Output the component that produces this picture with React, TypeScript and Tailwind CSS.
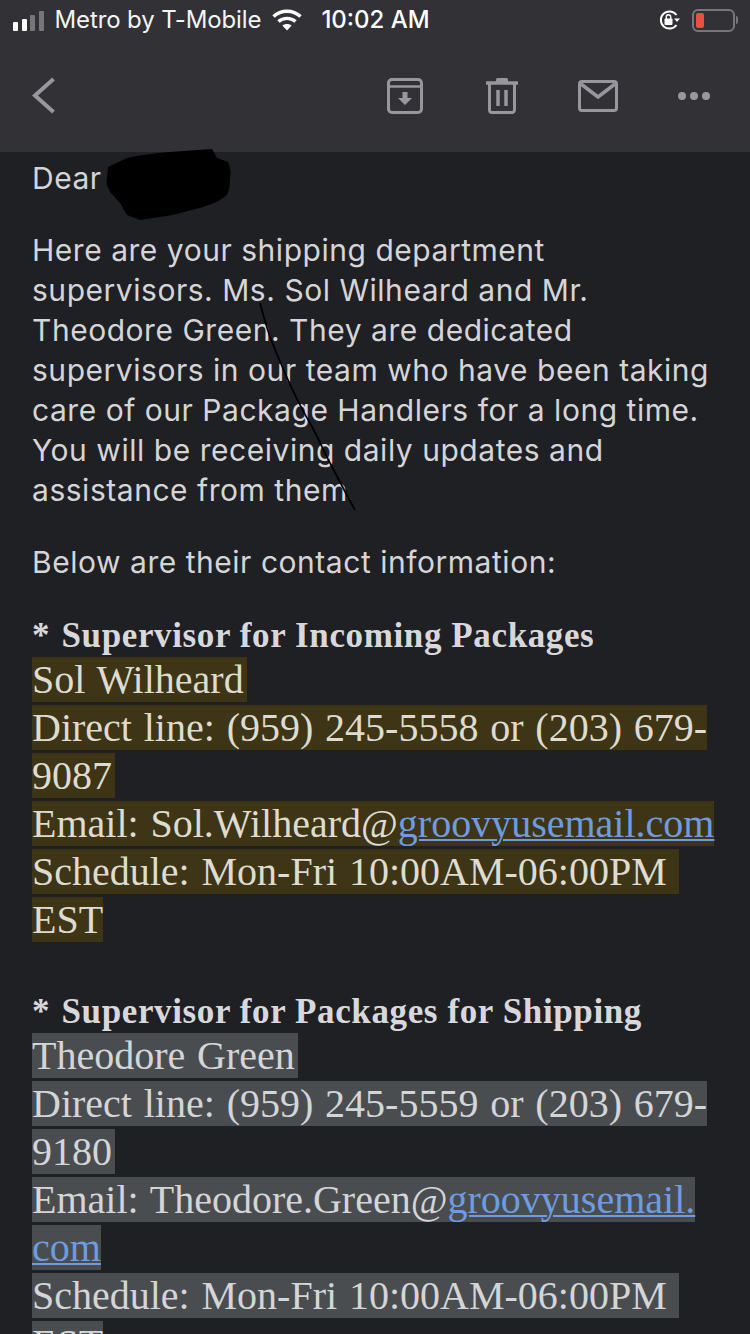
import React from "react";

const serif = "font-['Liberation_Serif',serif]";

function Signal() {
    return (
        <div className="flex items-end gap-[3.500px] h-[22px] mb-[1px]">
            <div className="w-[5px] h-[9px] rounded-[1px] bg-white"></div>
            <div className="w-[5px] h-[12px] rounded-[1px] bg-white"></div>
            <div className="w-[5px] h-[16px] rounded-[1px] bg-[#77777b]"></div>
            <div className="w-[5px] h-[20px] rounded-[1px] bg-[#77777b]"></div>
        </div>
    );
}

function Wifi() {
    return (
        <svg width="30" height="22" viewBox="0 0 30 22" fill="none" stroke="#fff" strokeWidth="3.4">
            <path d="M1.5 7.5C9 .5 21 .5 28.500 7.500" />
            <path d="M6.500 12.500C11 8.300 19 8.300 23.500 12.500" />
            <path d="M15 21.500l-4.600-5c2.600-2 6.600-2 9.200 0z" fill="#fff" stroke="none" />
        </svg>
    );
}

function RotationLock() {
    return (
        <svg width="24" height="24" viewBox="0 0 24 24" fill="none">
            <path d="M18.500 17A8.600 8.600 0 1 1 18.500 7" stroke="#fff" strokeWidth="2" />
            <path d="M16 10.500h6l-3 3.600z" fill="#fff" />
            <rect x="6.500" y="10.500" width="8" height="6.500" rx="1" fill="#fff" />
            <path d="M8.300 11V9a2.200 2.200 0 0 1 4.400 0v2" stroke="#fff" strokeWidth="1.400" />
        </svg>
    );
}

function Battery() {
    return (
        <div className="flex items-center gap-[1px]">
            <div className="w-[43px] h-[23px] rounded-[6px] border-2 border-[#77777b] p-[2px]">
                <div className="w-[8px] h-full rounded-[2px] bg-[#ea4f3f]"></div>
            </div>
            <div className="w-[2px] h-[8px] rounded-r-sm bg-[#77777b]"></div>
        </div>
    );
}

function Toolbar() {
    return (
        <div className="flex items-center h-[64px] mt-[24px] pl-[31px] pr-[40px]">
            <svg width="26" height="40" viewBox="0 0 26 40" fill="none" stroke="#97979d" strokeWidth="4">
                <path d="M22.500 3L4 19.500 22.500 36" />
            </svg>
            <div className="flex items-center ml-auto">
                <svg width="36" height="36" viewBox="0 0 36 36" fill="none" className="mr-[63px]">
                    <path d="M5 1.500h26a3.500 3.500 0 0 1 3.500 3.500v26a3.500 3.500 0 0 1-3.500 3.500H5A3.500 3.500 0 0 1 1.500 31V5A3.500 3.500 0 0 1 5 1.500z" stroke="#97979d" strokeWidth="3" />
                    <path d="M1.500 8.500h33" stroke="#97979d" strokeWidth="2.500" />
                    <path d="M15.500 14h5v6h4.500L18 27l-7-7h4.500z" fill="#97979d" />
                </svg>
                <svg width="32" height="36" viewBox="0 0 32 36" fill="none" className="mr-[60px]">
                    <path d="M0 5h32" stroke="#97979d" strokeWidth="3.500" />
                    <path d="M10 4V1.500A1.500 1.500 0 0 1 11.500 0h9A1.500 1.500 0 0 1 22 1.500V4" fill="#97979d" />
                    <path d="M3.500 5v27a2.500 2.500 0 0 0 2.500 2.500h20a2.500 2.500 0 0 0 2.500-2.500V5" stroke="#97979d" strokeWidth="3" />
                    <path d="M12 12v16M20 12v16" stroke="#97979d" strokeWidth="3.500" />
                </svg>
                <svg width="40" height="32" viewBox="0 0 40 32" fill="none" className="mr-[60px]">
                    <rect x="1.500" y="1.500" width="37" height="29" rx="2.500" stroke="#97979d" strokeWidth="3" />
                    <path d="M3 4l17 13L37 4" stroke="#97979d" strokeWidth="3.500" />
                </svg>
                <div className="flex gap-[4px]">
                    <div className="w-[8px] h-[8px] rounded-full bg-[#97979d]"></div>
                    <div className="w-[8px] h-[8px] rounded-full bg-[#97979d]"></div>
                    <div className="w-[8px] h-[8px] rounded-full bg-[#97979d]"></div>
                </div>
            </div>
        </div>
    );
}

function Header() {
    return (
        <div className="h-[152px] bg-[#313136] shrink-0">
            <div className="flex items-center h-[40px] pl-[13px] pr-[12px] text-white font-['Inter',sans-serif] text-[24px]">
                <Signal />
                <span className="ml-[11px] tracking-[-0.12px] text-[#f4f4f5]">Metro by T-Mobile</span>
                <div className="ml-[11px]"><Wifi /></div>
                <span className="ml-[19px] font-medium">10:02 AM</span>
                <div className="ml-auto mr-[10px]"><RotationLock /></div>
                <Battery />
            </div>
            <Toolbar />
        </div>
    );
}

function Link(props: { children: React.ReactNode }) {
    return <span className="text-[#6f9be0] underline decoration-2 underline-offset-2">{props.children}</span>;
}

function Heading(props: { children: React.ReactNode }) {
    return (
        <div className={"text-[35px] leading-[40px] font-bold text-[#d8d8dc] tracking-[0.62px] " + serif}>
            <span className="mr-[2px]">*</span> {props.children}
        </div>
    );
}

function App() {
    const yellow = "bg-[#3d3516] text-[#dedbd0]";
    const grey = "bg-[#4a4d50] text-[#d3d5d7]";
    return (
        <div className="relative h-[1334px] w-[750px] overflow-hidden flex flex-col bg-[#1f2024]">
            <Header />
            <div className="px-[32px] pt-[6px]">
                <div className="font-['Inter',sans-serif] text-[30px] leading-[40px] text-[#d5d5d8] tracking-[0.53px]">
                    <p>Dear</p>
                    <p className="mt-[32px]">
                        Here are your shipping department
                        <br />
                        supervisors. Ms. Sol Wilheard and Mr.
                        <br />
                        Theodore Green. They are dedicated
                        <br />
                        supervisors in our team who have been taking
                        <br />
                        care of our Package Handlers for a long time.
                        <br />
                        You will be receiving daily updates and
                        <br />
                        assistance from them
                    </p>
                    <p className="mt-[32px]">Below are their contact information:</p>
                </div>
                <div className="mt-[34px]">
                    <Heading>Supervisor for Incoming Packages</Heading>
                    <div className={"text-[40px] leading-[48px] [word-spacing:1.800px] " + serif}>
                        <span className={yellow + " pr-[3px]"}>Sol Wilheard</span>
                        <br />
                        <span className={yellow}>Direct line: (959) 245-5558 or (203) 679-</span>
                        <br />
                        <span className={yellow + " pr-[3px]"}>9087</span>
                        <br />
                        <span className={yellow}>Email: Sol.Wilheard@<Link>groovyusemail.com</Link></span>
                        <br />
                        <span className={yellow + " pr-[12px]"}>Schedule: Mon-Fri 10:00AM-06:00PM</span>
                        <br />
                        <span className={yellow}>EST</span>
                    </div>
                </div>
                <div className="mt-[48px]">
                    <Heading>Supervisor for Packages for Shipping</Heading>
                    <div className={"text-[40px] leading-[48px] [word-spacing:1.800px] " + serif}>
                        <span className={grey + " pr-[3px]"}>Theodore Green</span>
                        <br />
                        <span className={grey}>Direct line: (959) 245-5559 or (203) 679-</span>
                        <br />
                        <span className={grey + " pr-[3px]"}>9180</span>
                        <br />
                        <span className={grey}>Email: Theodore.Green@<Link>groovyusemail.</Link></span>
                        <br />
                        <span className={grey}><Link>com</Link></span>
                        <br />
                        <span className={grey + " pr-[12px]"}>Schedule: Mon-Fri 10:00AM-06:00PM</span>
                        <br />
                        <span className={grey}>EST</span>
                    </div>
                </div>
            </div>
            {/* marker scribble over the name and the pen stroke over the text */}
            <svg className="absolute left-0 top-[140px]" width="750" height="400" viewBox="0 140 750 400" fill="none">
                <path d="M108 167L127 158C140 155 155 153 170 152L212 149L217 158L228 162C231 170 231 172 230 178C230 186 229 190 227 195C220 201 212 204 203 207L173 215L140 220L127 215L120 203L110 192C107 186 106 182 107 178z" fill="#000" />
                <path d="M260 303C264 318 268 332 272 342C280 362 296 400 310 423C318 437 323 450 330 463C338 478 346 494 355 510" stroke="#000" strokeWidth="1.700" />
            </svg>
        </div>
    );
}

export default App;
